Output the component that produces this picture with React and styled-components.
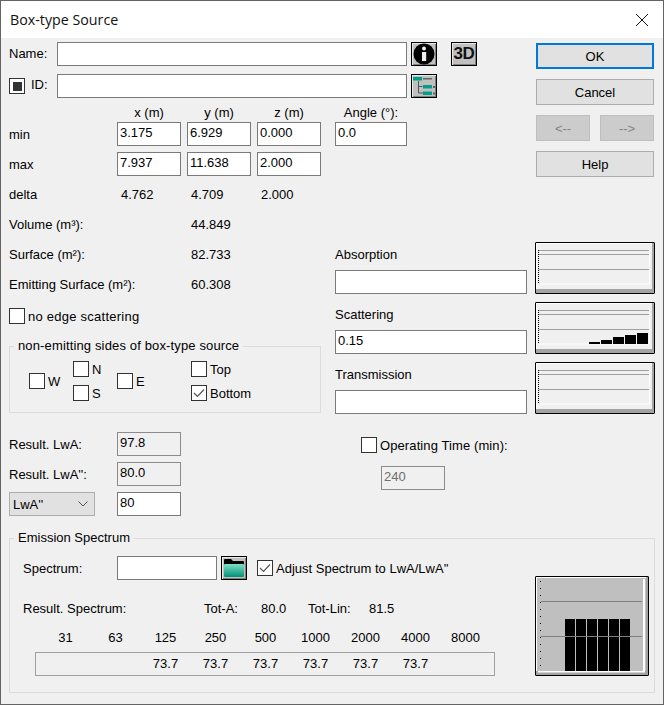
import React from "react";
import styled, { createGlobalStyle } from "styled-components";

const Global = createGlobalStyle`
  html, body { margin: 0; padding: 0; background: #f0f0f0; }
  * { box-sizing: border-box; }
`;

const Win = styled.div`
  width: 664px; height: 705px; border: 1px solid #646464; background: #f0f0f0;
  font-family: "Liberation Sans", Arial, sans-serif; font-size: 13px; color: #000;
  display: flex; flex-direction: column; overflow: hidden;
`;
const TitleBar = styled.div`
  height: 37px; flex: none; background: #fff; display: flex; align-items: center; justify-content: space-between;
  padding: 0 14px 0 9px; font-family: "Open Sans", sans-serif; font-size: 14.25px; color: #111;
`;
const Body = styled.div`
  padding: 4px 8px 0; display: flex; flex-direction: column;
`;
const Top = styled.div`
  display: grid; grid-template-columns: 527px 118px; height: 134px;
`;
const Field = styled.input`
  display: block; width: ${p => p.$w || 64}px; height: 24px; border: 1px solid ${p => (p.$off ? "#8c8c8c" : "#7a7a7a")};
  background: ${p => (p.$off ? "#f0f0f0" : "#fff")}; color: ${p => (p.$dim ? "#6d6d6d" : "#000")};
  font: 13px "Liberation Sans", Arial, sans-serif; padding: 0 0 3px 2px; margin: 0; border-radius: 0; outline: none;
`;
const IdentRow = styled.div`
  display: flex; align-items: center; height: 24px; margin-bottom: 8px;
`;
const RowLabel = styled.span`
  width: 48px; flex: none; padding-bottom: ${p => p.$up || 0}px;
`;
const IconBtn = styled.button`
  width: 26px; height: 24px; margin: 0 0 0 ${p => p.$ml || 4}px; padding: 0; border: 1px solid #000; background: #c0c0c0;
  box-shadow: inset 1px 1px 0 #e8e8e8, inset -1px -1px 0 #808080; display: flex; align-items: center; justify-content: center;
  flex: none; font: bold 17px "Liberation Sans", Arial, sans-serif; color: #111; letter-spacing: -0.3px;
`;
const Box = styled.span`
  width: 16px; height: 16px; flex: none; border: 1px solid #333; background: #fff;
  display: flex; align-items: center; justify-content: center;
`;
const MixedMark = styled.span`
  width: 9px; height: 9px; background: #333; display: block;
`;
const IdText = styled.span`
  margin-top: -4px;
`;
const TickText = styled.span`
  padding-top: ${p => p.$drop || 0}px;
`;
const Coords = styled.div`
  display: grid; grid-template-columns: 102px 64px 64px 64px 80px; column-gap: 6px; row-gap: 6px;
  grid-auto-rows: 24px;
`;
const Head = styled.div`
  height: 16px; line-height: 16px; text-align: center; width: ${p => p.$w || 64}px;
`;
const AngleHead = styled(Head)`
  margin-left: 8px;
`;
const CoordHeadRow = styled.div`
  display: grid; grid-template-columns: 102px 64px 64px 64px 80px; column-gap: 6px; height: 16px; margin-top: -1px; margin-bottom: 1px;
`;
const AngleCell = styled.div`
  padding-left: 8px;
`;
const CellLabel = styled.div`
  display: flex; align-items: center; height: 24px;
`;
const Side = styled.div`
  display: flex; flex-direction: column; gap: 10px; padding-top: 1px;
`;
const DlgBtn = styled.button`
  height: 26px; width: ${p => (p.$w ? p.$w + "px" : "100%")}; margin: 0; padding: 0;
  border: ${p => (p.$main ? "2px solid #0078d7" : `1px solid ${p.$off ? "#bfbfbf" : "#adadad"}`)};
  background: ${p => (p.$off ? "#cccccc" : "#e1e1e1")}; color: ${p => (p.$off ? "#838383" : "#000")};
  font: 13px "Liberation Sans", Arial, sans-serif;
`;
const ArrowRow = styled.div`
  display: flex; justify-content: space-between;
`;
const Middle = styled.div`
  display: grid; grid-template-columns: 312px 320px; column-gap: 14px; margin-top: 6px; height: 232px;
`;
const Stats = styled.div`
  display: flex; flex-direction: column;
`;
const StatRow = styled.div`
  display: flex; align-items: center; height: 24px; margin-bottom: 6px;
`;
const ResultRow = styled(StatRow)`
  margin-top: 16px; margin-bottom: 0;
`;
const StatCell = styled.span`
  width: ${p => p.$w}px; flex: none;
`;
const CheckLine = styled.label`
  display: flex; align-items: center; gap: ${p => p.$gap || 3}px; height: 16px; letter-spacing: ${p => p.$track || 0}px;
`;
const EdgeLine = styled.div`
  margin-top: 6px; margin-bottom: 14px;
`;
const Group = styled.fieldset`
  margin: 0; padding: 0 0 0 ${p => p.$pl || 0}px; border: 1px solid #dcdcdc; border-radius: 0; min-width: 0;
`;
const Legend = styled.legend`
  margin-left: ${p => p.$ml ?? 4}px; padding: 0 4px; height: 16px; line-height: 16px; letter-spacing: ${p => p.$track || 0}px;
`;
const SidesGrid = styled.div`
  display: grid; grid-template-columns: 44px 44px 74px 100px; grid-template-rows: 16px 16px; row-gap: 8px;
  padding: 7px 0 11px 19px;
`;
const GridCell = styled.div`
  grid-column: ${p => p.$c}; grid-row: ${p => p.$r}; align-self: center;
`;
const Materials = styled.div`
  display: grid; grid-template-columns: 192px 120px; column-gap: 8px; grid-auto-rows: 52px; row-gap: 8px; padding-top: 60px;
`;
const MatCell = styled.div`
  display: flex; flex-direction: column;
`;
const MatLabel = styled.div`
  height: 28px; line-height: 26px;
`;
const ChartBtn = styled.button`
  width: ${p => p.$w || 120}px; height: ${p => p.$h || 52}px; padding: 0; margin: 0; border: 1px solid #000; border-radius: 1px;
  background: ${p => p.$bg || "#f0f0f0"}; display: block; align-self: ${p => p.$self || "auto"}; flex: none;
  box-shadow: inset -2px -4px 0 #a3a3a3, inset 1px 1px 0 #fff;
`;
const ChartSvg = styled.svg`
  display: block; margin: -1px;
`;
const Results = styled.div`
  display: grid; grid-template-columns: 108px 64px 180px 1fr; margin-top: 18px; grid-template-rows: 24px 24px 24px; row-gap: 6px;
`;
const Picker = styled.div`
  grid-column: 1; width: 86px; height: 24px; border: 1px solid #adadad; background: #e1e1e1; display: flex; align-items: center;
  justify-content: space-between; padding: 0 6px 0 3px;
`;
const OperatingCell = styled.div`
  grid-column: 3 / span 2; grid-row: 1; padding: 5px 0 0 180px; width: 400px;
`;
const OpTime = styled.div`
  grid-column: 3 / span 2; grid-row: 2; padding: 4px 0 0 200px; width: 400px;
`;
const EmissionWrap = styled.div`
  margin-top: 14px; width: 646px;
`;
const EmissionGrid = styled.div`
  display: grid; grid-template-columns: 512px 114px; height: 120px; margin: 10px 0 16px;
`;
const EmissionLeft = styled.div`
  display: flex; flex-direction: column;
`;
const SpecRow = styled.div`
  display: flex; align-items: center; height: 24px;
`;
const SpecLabel = styled.span`
  width: 94px; flex: none;
`;
const FolderGap = styled.div`
  width: 10px; flex: none;
`;
const Freqs = styled.div`
  display: grid; grid-template-columns: repeat(9, 50px); margin-left: 17.5px; height: 16px; line-height: 16px; margin-top: 10px;
  & > span { text-align: center; }
`;
const Table = styled.div`
  margin: 6px 0 0 12px; width: 460px; height: 24px; border: 1px solid #a0a0a0; padding-left: 4.5px;
  display: grid; grid-template-columns: repeat(9, 50px); align-items: center;
  & > span { text-align: center; padding-bottom: 2px; }
`;

const Close = () => (
  <svg width="14" height="14" viewBox="0 0 14 14"><path d="M1 1 L13 13 M13 1 L1 13" stroke="#111" strokeWidth="1" fill="none" /></svg>
);
const InfoIcon = () => (
  <svg width="24" height="22" viewBox="0 0 24 22">
    <circle cx="12" cy="11" r="10.5" fill="#000" />
    <circle cx="12" cy="5.5" r="2" fill="#eee" />
    <rect x="10" y="9" width="4.2" height="9" fill="#eee" />
  </svg>
);
const TreeIcon = () => (
  <svg width="24" height="22" viewBox="0 0 24 22">
    <rect x="1" y="2" width="9" height="3.5" fill="#00a088" />
    <rect x="11" y="3" width="9" height="1.5" fill="#666" />
    <path d="M6.5 6 V18 H11 M6.5 11.5 H10.5" stroke="#555" strokeWidth="1" fill="none" />
    <rect x="11" y="10" width="9" height="3.5" fill="#00a088" />
    <rect x="11" y="16.5" width="9" height="3.5" fill="#00a088" />
    <rect x="21.5" y="11" width="1" height="2" fill="#000" />
    <rect x="21.5" y="17.5" width="1" height="2" fill="#000" />
  </svg>
);
const FolderIcon = () => (
  <svg width="24" height="22" viewBox="0 0 24 22">
    <defs>
      <linearGradient id="fg" x1="0" x2="0" y1="0" y2="1">
        <stop offset="0" stopColor="#7fe0c4" />
        <stop offset="1" stopColor="#00907a" />
      </linearGradient>
    </defs>
    <path d="M2 6 V3 Q2 2 3 2 H9 L11 4 H21 Q22 4 22 5 V8 H2 Z" fill="#000" />
    <rect x="2" y="7" width="20" height="13" rx="1" fill="url(#fg)" />
  </svg>
);
const Check = () => (
  <svg width="14" height="14" viewBox="0 0 14 14"><path d="M2 7 L5.5 10.5 L12 3.5" stroke="#555" strokeWidth="1.2" fill="none" /></svg>
);
const Chevron = () => (
  <svg width="10" height="6" viewBox="0 0 10 6"><path d="M0.5 0.5 L5 5 L9.5 0.5" stroke="#555" strokeWidth="1" fill="none" /></svg>
);

const dots = (x, from, to, step) => {
  const out = [];
  for (let y = from; y <= to; y += step) out.push(<rect key={y} x={x} y={y} width="1" height="1" fill="#000" />);
  return out;
};

const MiniChart = ({ bars }) => (
  <ChartBtn>
    <ChartSvg width="120" height="52" viewBox="0 0 120 52">
      <rect x="5" y="41.5" width="109" height="1" fill="#fff" />
      <rect x="114" y="8" width="1" height="34" fill="#fff" />
      {[8, 12, 27].map(y => <rect key={y} x="4" y={y} width="110" height="1" fill="#a0a0a0" />)}
      {dots(3, 8, 41, 2)}
      {bars && bars.map((t, i) => <rect key={i} x={54 + i * 12} y={t} width="11" height={42 - t} fill="#000" />)}
    </ChartSvg>
  </ChartBtn>
);

const BigChart = () => (
  <ChartBtn $w={114} $h={100} $bg="#bfbfbf" $self="end">
    <ChartSvg width="114" height="100" viewBox="0 0 114 100">
      <rect x="108" y="3" width="2" height="93" fill="#fff" />
      <rect x="3" y="95" width="107" height="1.5" fill="#fff" />
      {[0, 1, 2, 3, 4, 5].map(i => <rect key={i} x={30 + i * 11} y="43" width="10" height="52" fill="#000" />)}
      {[25, 60].map(y => <rect key={y} x="6" y={y} width="101" height="1" fill="#808080" />)}
      {dots(5, 5, 92, 7)}
    </ChartSvg>
  </ChartBtn>
);

const Tick = ({ on, label, gap, track, drop }) => (
  <CheckLine $gap={gap} $track={track}>
    <Box>{on && <Check />}</Box>
    <TickText $drop={drop}>{label}</TickText>
  </CheckLine>
);

const FREQS = ["31", "63", "125", "250", "500", "1000", "2000", "4000", "8000"];
const LEVELS = ["", "", "73.7", "73.7", "73.7", "73.7", "73.7", "73.7", ""];

export default function App() {
  return (
    <Win>
      <Global />
      <TitleBar>Box-type Source<Close /></TitleBar>
      <Body>
        <Top>
          <div>
            <IdentRow>
              <RowLabel $up={1}>Name:</RowLabel>
              <Field $w={350} readOnly />
              <IconBtn><InfoIcon /></IconBtn>
              <IconBtn $ml={14}>3D</IconBtn>
            </IdentRow>
            <IdentRow>
              <RowLabel>
                <CheckLine $gap={6}><Box><MixedMark /></Box><IdText>ID:</IdText></CheckLine>
              </RowLabel>
              <Field $w={350} readOnly />
              <IconBtn><TreeIcon /></IconBtn>
            </IdentRow>
            <CoordHeadRow>
              <span />
              <Head>x (m)</Head>
              <Head>y (m)</Head>
              <Head>z (m)</Head>
              <AngleHead $w={72}>Angle (°):</AngleHead>
            </CoordHeadRow>
            <Coords>
              <CellLabel>min</CellLabel>
              <Field readOnly value="3.175" />
              <Field readOnly value="6.929" />
              <Field readOnly value="0.000" />
              <AngleCell><Field $w={72} readOnly value="0.0" /></AngleCell>
              <CellLabel>max</CellLabel>
              <Field readOnly value="7.937" />
              <Field readOnly value="11.638" />
              <Field readOnly value="2.000" />
            </Coords>
          </div>
          <Side>
            <DlgBtn $main>OK</DlgBtn>
            <DlgBtn>Cancel</DlgBtn>
            <ArrowRow>
              <DlgBtn $off $w={54}>&lt;--</DlgBtn>
              <DlgBtn $off $w={54}>--&gt;</DlgBtn>
            </ArrowRow>
            <DlgBtn>Help</DlgBtn>
          </Side>
        </Top>
        <Middle>
          <Stats>
            <StatRow><StatCell $w={112}>delta</StatCell><StatCell $w={70}>4.762</StatCell><StatCell $w={70}>4.709</StatCell><StatCell $w={60}>2.000</StatCell></StatRow>
            <StatRow><StatCell $w={182}>Volume (m³):</StatCell><StatCell $w={70}>44.849</StatCell></StatRow>
            <StatRow><StatCell $w={182}>Surface (m²):</StatCell><StatCell $w={70}>82.733</StatCell></StatRow>
            <StatRow><StatCell $w={182}>Emitting Surface (m²):</StatCell><StatCell $w={70}>60.308</StatCell></StatRow>
            <EdgeLine><Tick label="no edge scattering" track={0.25} /></EdgeLine>
            <Group>
              <Legend $track={0.14}>non-emitting sides of box-type source</Legend>
              <SidesGrid>
                <GridCell $c={1} $r="1 / span 2"><Tick label="W" drop={1} /></GridCell>
                <GridCell $c={2} $r={1}><Tick label="N" drop={1} /></GridCell>
                <GridCell $c={2} $r={2}><Tick label="S" drop={1} /></GridCell>
                <GridCell $c={3} $r="1 / span 2"><Tick label="E" drop={1} /></GridCell>
                <GridCell $c={4} $r={1}><Tick label="Top" drop={1} /></GridCell>
                <GridCell $c={4} $r={2}><Tick on label="Bottom" drop={1} /></GridCell>
              </SidesGrid>
            </Group>
          </Stats>
          <Materials>
            <MatCell><MatLabel>Absorption</MatLabel><Field $w={192} readOnly /></MatCell>
            <MiniChart />
            <MatCell><MatLabel>Scattering</MatLabel><Field $w={192} readOnly value="0.15" /></MatCell>
            <MiniChart bars={[40, 38, 35, 33, 31]} />
            <MatCell><MatLabel>Transmission</MatLabel><Field $w={192} readOnly /></MatCell>
            <MiniChart />
          </Materials>
        </Middle>
        <Results>
          <CellLabel>Result. LwA:</CellLabel>
          <Field $off readOnly value="97.8" />
          <OperatingCell><Tick label="Operating Time (min):" track={0.1} /></OperatingCell>
          <CellLabel>Result. LwA'':</CellLabel>
          <Field $off readOnly value="80.0" />
          <OpTime><Field $off $dim readOnly value="240" /></OpTime>
          <Picker>LwA''<Chevron /></Picker>
          <Field readOnly value="80" />
        </Results>
        <EmissionWrap>
          <Group $pl={13}>
            <Legend $ml={-9}>Emission Spectrum</Legend>
            <EmissionGrid>
              <EmissionLeft>
                <SpecRow>
                  <SpecLabel>Spectrum:</SpecLabel>
                  <Field $w={100} readOnly />
                  <IconBtn><FolderIcon /></IconBtn>
                  <FolderGap />
                  <Tick on label="Adjust Spectrum to LwA/LwA''" />
                </SpecRow>
                <ResultRow>
                  <StatCell $w={181}>Result. Spectrum:</StatCell>
                  <StatCell $w={57}>Tot-A:</StatCell>
                  <StatCell $w={47}>80.0</StatCell>
                  <StatCell $w={61}>Tot-Lin:</StatCell>
                  <StatCell $w={40}>81.5</StatCell>
                </ResultRow>
                <Freqs>{FREQS.map(f => <span key={f}>{f}</span>)}</Freqs>
                <Table>{LEVELS.map((v, i) => <span key={i}>{v}</span>)}</Table>
              </EmissionLeft>
              <BigChart />
            </EmissionGrid>
          </Group>
        </EmissionWrap>
      </Body>
    </Win>
  );
}
